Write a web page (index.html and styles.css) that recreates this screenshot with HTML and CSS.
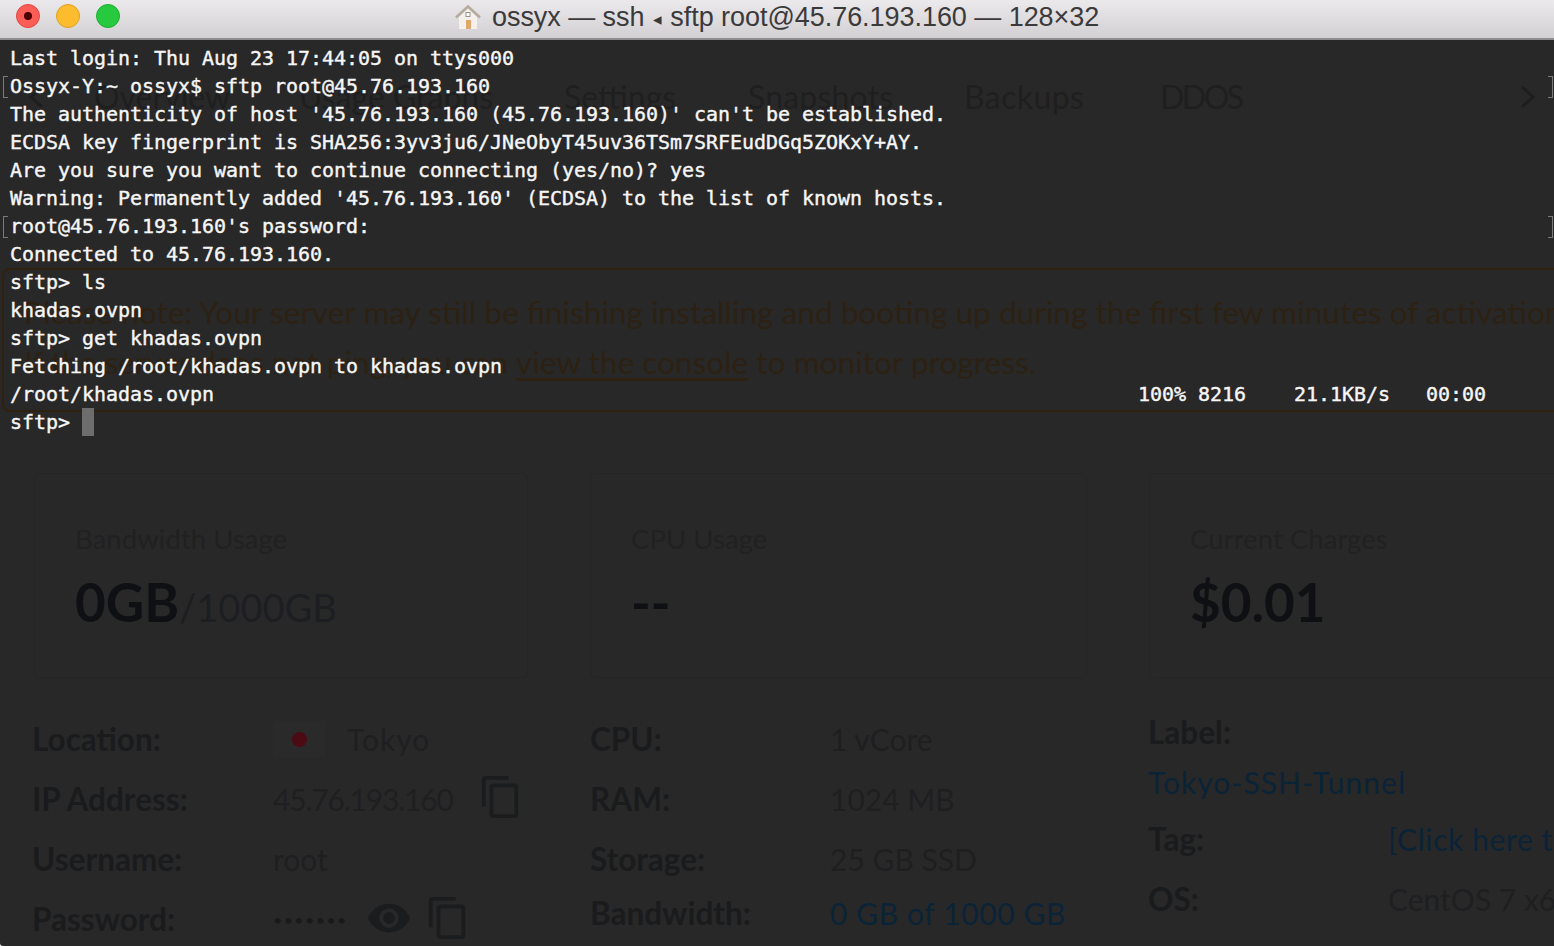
FILE: index.html
```html
<!DOCTYPE html>
<html lang="en">
<head>
<meta charset="utf-8">
<title>ossyx — ssh ◂ sftp root@45.76.193.160 — 128×32</title>
<link rel="stylesheet" href="styles.css">
</head>
<body>
<div class="window">
  <header class="titlebar">
    <div class="lights">
      <span class="light red"><span class="red-dot"></span></span>
      <span class="light yellow"></span>
      <span class="light green"></span>
    </div>
    <svg class="house" viewBox="0 0 26 26" aria-hidden="true">
      <path d="M4 13 V25 H22 V13 L13 5 Z" fill="#f4f1ec"/>
      <path d="M1 13.5 L13 2.5 L25 13.5" fill="none" stroke="#b5aa9b" stroke-width="2.4"/>
      <rect x="11" y="8.5" width="4" height="4" fill="#fff" stroke="#9a9186"/>
      <rect x="11" y="16" width="5" height="9" fill="#e0a868"/>
    </svg>
    <span class="title">ossyx — ssh <span class="tri">◂</span> sftp root@45.76.193.160 — 128×32</span>
  </header>

  <div class="body">
    <main class="ghost">
      <nav class="tabs">
        <svg class="chev chev-left" viewBox="0 0 16 24" aria-hidden="true"><path d="M14 2 L3 12 L14 22" fill="none" stroke="currentColor" stroke-width="3"/></svg>
        <span class="tab t1">Overview</span>
        <span class="tab t2">Usage Graphs</span>
        <span class="tab t3">Settings</span>
        <span class="tab t4">Snapshots</span>
        <span class="tab t5">Backups</span>
        <span class="tab t6">DDOS</span>
        <svg class="chev chev-right" viewBox="0 0 16 24" aria-hidden="true"><path d="M2 2 L13 12 L2 22" fill="none" stroke="currentColor" stroke-width="3"/></svg>
      </nav>

      <section class="alert">
        <p>Please note: Your server may still be finishing installing and booting up during the first few minutes of activation.</p>
        <p>If the server does not ping, you can <u>view the console</u> to monitor progress.</p>
      </section>

      <section class="cards">
        <div class="card">
          <div class="card-title">Bandwidth Usage</div>
          <div class="card-value">0GB<small>/1000GB</small></div>
        </div>
        <div class="card">
          <div class="card-title">CPU Usage</div>
          <div class="card-value">--</div>
        </div>
        <div class="card">
          <div class="card-title">Current Charges</div>
          <div class="card-value">$0.01</div>
        </div>
      </section>

      <section class="info">
        <dl class="col">
          <dt>Location:</dt>
          <dd class="wide"><span class="flag"><span class="flag-dot"></span></span>Tokyo</dd>
          <dt>IP Address:</dt>
          <dd><span class="ip">45.76.193.160</span>
            <svg class="ico copy-a" viewBox="0 0 24 24" aria-hidden="true"><path d="M16 1H4c-1.1 0-2 .9-2 2v14h2V3h12V1zm3 4H8c-1.1 0-2 .9-2 2v14c0 1.1.9 2 2 2h11c1.1 0 2-.9 2-2V7c0-1.1-.9-2-2-2zm0 16H8V7h11v14z"/></svg>
          </dd>
          <dt>Username:</dt>
          <dd>root</dd>
          <dt>Password:</dt>
          <dd><span class="dots">•••••••</span>
            <svg class="ico eye" viewBox="0 0 24 24" aria-hidden="true"><path d="M12 4.5C7 4.5 2.73 7.61 1 12c1.73 4.39 6 7.5 11 7.5s9.27-3.11 11-7.5c-1.73-4.39-6-7.5-11-7.5zM12 17c-2.76 0-5-2.24-5-5s2.24-5 5-5 5 2.24 5 5-2.24 5-5 5zm0-8c-1.66 0-3 1.34-3 3s1.34 3 3 3 3-1.34 3-3-1.34-3-3-3z"/></svg>
            <svg class="ico copy-b" viewBox="0 0 24 24" aria-hidden="true"><path d="M16 1H4c-1.1 0-2 .9-2 2v14h2V3h12V1zm3 4H8c-1.1 0-2 .9-2 2v14c0 1.1.9 2 2 2h11c1.1 0 2-.9 2-2V7c0-1.1-.9-2-2-2zm0 16H8V7h11v14z"/></svg>
          </dd>
        </dl>
        <dl class="col">
          <dt>CPU:</dt>
          <dd>1 vCore</dd>
          <dt>RAM:</dt>
          <dd>1024 MB</dd>
          <dt>Storage:</dt>
          <dd>25 GB SSD</dd>
          <dt class="bw">Bandwidth:</dt>
          <dd class="bw link">0 GB of 1000 GB</dd>
        </dl>
        <div class="col3">
          <div class="label-title">Label:</div>
          <div class="label-value">Tokyo-SSH-Tunnel</div>
          <dl class="col tight">
            <dt>Tag:</dt>
            <dd class="link">[Click here to set]</dd>
            <dt>OS:</dt>
            <dd>CentOS 7 x64</dd>
          </dl>
        </div>
      </section>
    </main>

    <pre class="terminal"><span class="tline">Last login: Thu Aug 23 17:44:05 on ttys000</span>
<span class="tline mark">Ossyx-Y:~ ossyx$ sftp root@45.76.193.160</span>
<span class="tline">The authenticity of host '45.76.193.160 (45.76.193.160)' can't be established.</span>
<span class="tline">ECDSA key fingerprint is SHA256:3yv3ju6/JNeObyT45uv36TSm7SRFEudDGq5ZOKxY+AY.</span>
<span class="tline">Are you sure you want to continue connecting (yes/no)? yes</span>
<span class="tline">Warning: Permanently added '45.76.193.160' (ECDSA) to the list of known hosts.</span>
<span class="tline mark">root@45.76.193.160's password:</span>
<span class="tline">Connected to 45.76.193.160.</span>
<span class="tline">sftp&gt; ls</span>
<span class="tline">khadas.ovpn</span>
<span class="tline">sftp&gt; get khadas.ovpn</span>
<span class="tline">Fetching /root/khadas.ovpn to khadas.ovpn</span>
<span class="tline">/root/khadas.ovpn                                                                             100% 8216    21.1KB/s   00:00</span>
<span class="tline">sftp&gt; <span class="cursor"></span></span></pre>
  </div>
</div>
</body>
</html>
```
FILE: styles.css
```css
* { box-sizing: border-box; }
html, body { margin: 0; padding: 0; background: #fff; }
body { width: 1554px; height: 946px; overflow: hidden; }

.window { width: 1554px; height: 946px; display: flex; flex-direction: column; overflow: hidden; background: #282828; border-bottom-left-radius: 3px; }

/* title bar */
.titlebar {
  height: 40px; flex: none; display: flex; align-items: center;
  padding: 0 0 6px 16px;
  background: linear-gradient(#ebe9eb, #d2d0d2);
  border-bottom: 2px solid #8e8e8e;
}
.lights { display: flex; gap: 16px; }
.light { width: 24px; height: 24px; border-radius: 50%; display: flex; align-items: center; justify-content: center; }
.red { background: #fc5d57; border: 1px solid #e2463f; }
.yellow { background: #fdbc2d; border: 1px solid #dfa023; }
.green { background: #27c93f; border: 1px solid #1dad2c; }
.red-dot { width: 8px; height: 8px; border-radius: 50%; background: #4c0002; }
.house { width: 26px; height: 26px; margin-left: 335px; margin-top: 1px; flex: none; }
.title { margin-left: 11px; margin-top: 4px; font: 27px/32px "Liberation Sans", Arial, sans-serif; color: #3b3a3b; white-space: nowrap; letter-spacing: -0.05px; }
.tri { font-size: 17px; margin: 0 1px; vertical-align: 1px; }

/* body, ghost page behind the translucent terminal */
.body { flex: 1; position: relative; overflow: hidden; }
.ghost { width: 1554px; font-family: Lato, "Open Sans", sans-serif; color: #1e1e1f; }

.tabs { height: 114px; display: flex; align-items: flex-start; position: relative; font-size: 32px; line-height: 40px; color: #1f1f20; padding-top: 37px; }
.tab { white-space: nowrap; }
.t1 { margin-left: 94px; width: 205px; }
.t2 { width: 265px; }
.t3 { width: 184px; }
.t4 { width: 216px; letter-spacing: 0.2px; }
.t5 { width: 196px; letter-spacing: 0.4px; }
.t6 { width: 120px; letter-spacing: -2.5px; }
.chev { position: absolute; top: 45px; width: 16px; height: 24px; color: #1c1e20; }
.chev-left { left: 28px; }
.chev-right { left: 1520px; }

.alert {
  margin: 114px 0 0 2px; height: 144px; width: 1562px;
  border: 2px solid #2f2110; border-radius: 8px;
  padding: 17px 0 0 0; color: #2c2113; font-size: 31.6px; line-height: 50px; font-weight: 400; white-space: nowrap;
}
.alert p { margin: 0 0 0 20px; }
.alert u { text-underline-offset: 4px; }

.cards { display: grid; grid-template-columns: 494px 497px 495px; column-gap: 62px; margin: 61px 0 0 34px; }
.card { height: 205px; border: 1px solid #252525; border-radius: 5px; padding: 47px 0 0 40px; }
.card-title { font-size: 27.6px; line-height: 36px; color: #212122; font-weight: 400; }
.card-value { margin-top: 14px; font-size: 53px; line-height: 62px; font-weight: 700; color: #0e1013; }
.card-value small { font-size: 38px; font-weight: 400; color: #1c1e21; }

.info { display: grid; grid-template-columns: 558px 558px 400px; margin: 31px 0 0 32px; }
.col { margin: 0; display: grid; grid-template-columns: 240px 1fr; grid-auto-rows: 60px; align-items: center; font-size: 30px; }
.info > .col:first-child { grid-template-columns: 241px 1fr; }
.col dt { font-size: 31.5px; font-weight: 700; color: #1a1b1d; white-space: nowrap; }
.col dd { margin: 0; font-weight: 400; color: #1f1f21; white-space: nowrap; display: flex; align-items: center; }
.col .bw { position: relative; top: -6px; }
.col .link { color: #0b2337; font-weight: 400; letter-spacing: 0.6px; }
.wide { letter-spacing: 1px; }
.ip { letter-spacing: -1.2px; }
.flag { width: 52px; height: 36px; background: #2a2a2a; display: inline-flex; align-items: center; justify-content: center; margin-right: 22px; }
.flag-dot { width: 15px; height: 15px; border-radius: 50%; background: #4b0a14; }
.ico { width: 46px; height: 46px; fill: #1b1c1e; flex: none; }
.copy-a { margin-left: 25px; margin-top: -4px; }
.eye { margin-left: 18px; margin-top: -3px; }
.copy-b { margin-left: 13px; margin-top: -3px; }
.dots { font-size: 16px; letter-spacing: 1.4px; color: #1a1a1b; }

.col3 { margin-top: -1px; font-size: 30px; }
.label-title { font-size: 31.5px; font-weight: 700; line-height: 49px; color: #1a1b1d; }
.label-value { color: #0b2337; line-height: 50px; letter-spacing: 1px; }
.tight { margin-top: 2px; }

/* terminal text over the ghost page */
.terminal {
  position: absolute; left: 0; top: 4px; margin: 0; padding: 0 0 0 10px; width: 1554px;
  font-family: "DejaVu Sans Mono", monospace; font-size: 20px; line-height: 28px; letter-spacing: -0.04px;
  color: #f6f6f6; -webkit-text-stroke: 0.4px #f6f6f6;
}
.tline { position: relative; display: inline-block; height: 28px; vertical-align: top; }
.mark::before, .mark::after { content: ""; position: absolute; top: 4px; height: 20px; width: 4px; border: 1.5px solid #7a7a7a; }
.mark::before { left: -7px; border-right: 0; }
.mark::after { left: 1538px; border-left: 0; }
.cursor { display: inline-block; width: 12px; height: 28px; background: #6d6d6d; vertical-align: top; }
```
